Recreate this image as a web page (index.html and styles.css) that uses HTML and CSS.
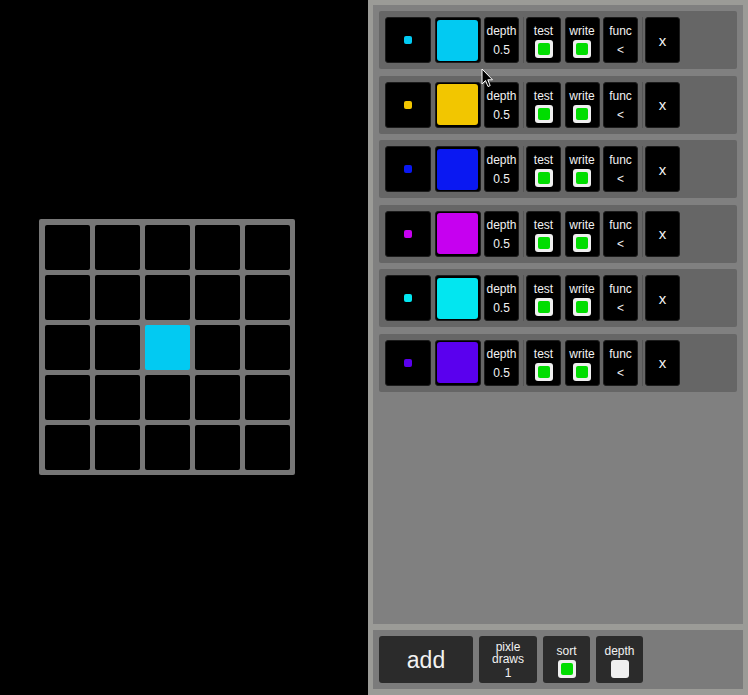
FILE: index.html
```html
<!DOCTYPE html>
<html>
<head>
<meta charset="utf-8">
<link rel="stylesheet" href="styles.css">
</head>
<body>
<div class="stage">
  <div class="grid">
    <div class="px"></div><div class="px"></div><div class="px"></div><div class="px"></div><div class="px"></div>
    <div class="px"></div><div class="px"></div><div class="px"></div><div class="px"></div><div class="px"></div>
    <div class="px"></div><div class="px"></div><div class="px px-on"></div><div class="px"></div><div class="px"></div>
    <div class="px"></div><div class="px"></div><div class="px"></div><div class="px"></div><div class="px"></div>
    <div class="px"></div><div class="px"></div><div class="px"></div><div class="px"></div><div class="px"></div>
  </div>
</div>
<div class="panel">
  <div class="list">
    <div class="row">
      <div class="cell dotcell"><span class="dot c1"></span></div>
      <div class="cell swatch"><span class="fill c1"></span></div>
      <div class="cell narrow two"><span class="lbl">depth</span><span class="val">0.5</span></div>
      <div class="sep"></div>
      <div class="cell narrow chk"><span class="lbl">test</span><span class="box on"></span></div>
      <div class="cell narrow chk"><span class="lbl">write</span><span class="box on"></span></div>
      <div class="cell narrow two"><span class="lbl">func</span><span class="val">&lt;</span></div>
      <div class="sep"></div>
      <div class="cell narrow del">x</div>
    </div>
    <div class="row">
      <div class="cell dotcell"><span class="dot c2"></span></div>
      <div class="cell swatch"><span class="fill c2"></span></div>
      <div class="cell narrow two"><span class="lbl">depth</span><span class="val">0.5</span></div>
      <div class="sep"></div>
      <div class="cell narrow chk"><span class="lbl">test</span><span class="box on"></span></div>
      <div class="cell narrow chk"><span class="lbl">write</span><span class="box on"></span></div>
      <div class="cell narrow two"><span class="lbl">func</span><span class="val">&lt;</span></div>
      <div class="sep"></div>
      <div class="cell narrow del">x</div>
    </div>
    <div class="row">
      <div class="cell dotcell"><span class="dot c3"></span></div>
      <div class="cell swatch"><span class="fill c3"></span></div>
      <div class="cell narrow two"><span class="lbl">depth</span><span class="val">0.5</span></div>
      <div class="sep"></div>
      <div class="cell narrow chk"><span class="lbl">test</span><span class="box on"></span></div>
      <div class="cell narrow chk"><span class="lbl">write</span><span class="box on"></span></div>
      <div class="cell narrow two"><span class="lbl">func</span><span class="val">&lt;</span></div>
      <div class="sep"></div>
      <div class="cell narrow del">x</div>
    </div>
    <div class="row">
      <div class="cell dotcell"><span class="dot c4"></span></div>
      <div class="cell swatch"><span class="fill c4"></span></div>
      <div class="cell narrow two"><span class="lbl">depth</span><span class="val">0.5</span></div>
      <div class="sep"></div>
      <div class="cell narrow chk"><span class="lbl">test</span><span class="box on"></span></div>
      <div class="cell narrow chk"><span class="lbl">write</span><span class="box on"></span></div>
      <div class="cell narrow two"><span class="lbl">func</span><span class="val">&lt;</span></div>
      <div class="sep"></div>
      <div class="cell narrow del">x</div>
    </div>
    <div class="row">
      <div class="cell dotcell"><span class="dot c5"></span></div>
      <div class="cell swatch"><span class="fill c5"></span></div>
      <div class="cell narrow two"><span class="lbl">depth</span><span class="val">0.5</span></div>
      <div class="sep"></div>
      <div class="cell narrow chk"><span class="lbl">test</span><span class="box on"></span></div>
      <div class="cell narrow chk"><span class="lbl">write</span><span class="box on"></span></div>
      <div class="cell narrow two"><span class="lbl">func</span><span class="val">&lt;</span></div>
      <div class="sep"></div>
      <div class="cell narrow del">x</div>
    </div>
    <div class="row">
      <div class="cell dotcell"><span class="dot c6"></span></div>
      <div class="cell swatch"><span class="fill c6"></span></div>
      <div class="cell narrow two"><span class="lbl">depth</span><span class="val">0.5</span></div>
      <div class="sep"></div>
      <div class="cell narrow chk"><span class="lbl">test</span><span class="box on"></span></div>
      <div class="cell narrow chk"><span class="lbl">write</span><span class="box on"></span></div>
      <div class="cell narrow two"><span class="lbl">func</span><span class="val">&lt;</span></div>
      <div class="sep"></div>
      <div class="cell narrow del">x</div>
    </div>
  </div>
  <div class="bar">
    <div class="btn add">add</div>
    <div class="btn draws"><span class="dlbl">pixle</span><span class="dlbl">draws</span><span class="dval">1</span></div>
    <div class="btn opt"><span class="lbl">sort</span><span class="box on"></span></div>
    <div class="btn opt"><span class="lbl">depth</span><span class="box"></span></div>
  </div>
</div>
<svg class="cursor" width="14" height="21" viewBox="0 0 14 21"><path d="M1 1 L1 16 L4.5 12.5 L7 18.5 L9.2 17.6 L6.8 11.8 L11.5 11.8 Z" fill="#000" stroke="#fff" stroke-width="1" stroke-linejoin="round"/></svg>
</body>
</html>
```
FILE: styles.css
```css
html, body {
  margin: 0;
  padding: 0;
}
body {
  width: 748px;
  height: 695px;
  background: #000;
  display: flex;
  font-family: "Liberation Sans", Arial, sans-serif;
  color: #f2f2f2;
  overflow: hidden;
  position: relative;
}
.stage {
  width: 368px;
  flex: none;
  display: flex;
  align-items: center;
  padding-left: 39px;
  padding-bottom: 1px;
  box-sizing: border-box;
}
.grid {
  background: #777;
  border-radius: 2px;
  padding: 5.5px;
  display: grid;
  grid-template-columns: repeat(5, 45px);
  grid-template-rows: repeat(5, 45px);
  gap: 5px;
}
.px {
  background: #000;
  border-radius: 2px;
}
.px-on {
  background: #02caf2;
}
.panel {
  width: 380px;
  flex: none;
  background: #9b9b97;
  padding: 5px 5px 6px 5px;
  box-sizing: border-box;
  display: flex;
  flex-direction: column;
  gap: 6px;
}
.list {
  flex: 1;
  background: #808080;
  padding: 6px;
  display: flex;
  flex-direction: column;
  gap: 6.5px;
}
.row {
  height: 58px;
  box-sizing: border-box;
  background: #666;
  border-radius: 2px;
  padding: 6px;
  display: flex;
  align-items: center;
}
.cell {
  height: 46px;
  box-sizing: border-box;
  background: #000;
  border: 1px solid #1c1c1c;
  border-radius: 3px;
  margin-right: 3.5px;
  flex: none;
}
.dotcell {
  width: 46px;
  display: flex;
  align-items: center;
  justify-content: center;
}
.dot {
  width: 8px;
  height: 8px;
  border-radius: 2px;
}
.swatch {
  width: 46px;
  padding: 1.5px;
  display: flex;
}
.fill {
  flex: 1;
  border-radius: 3px;
}
.narrow {
  width: 35px;
  display: flex;
  flex-direction: column;
  align-items: center;
  justify-content: center;
  font-size: 12px;
}
.two {
  gap: 5px;
  padding-top: 1.5px;
}
.chk {
  gap: 2px;
  padding-top: 2px;
}
.lbl, .val {
  line-height: 14px;
}
.sep {
  width: 1px;
  height: 46px;
  background: #555;
  margin-right: 2.5px;
  flex: none;
}
.del {
  font-size: 15px;
}
.box {
  width: 18px;
  height: 18px;
  box-sizing: border-box;
  background: #efefef;
  border-radius: 3px;
  display: flex;
  align-items: center;
  justify-content: center;
}
.box.on::after {
  content: "";
  width: 12px;
  height: 12px;
  border-radius: 2px;
  background: #00dd00;
}
.c1 { background: #02caf2; }
.c2 { background: #f2c600; }
.c3 { background: #0a18f2; }
.c4 { background: #c600f0; }
.c5 { background: #02e6f0; }
.c6 { background: #5a00ee; }
.bar {
  height: 59px;
  box-sizing: border-box;
  background: #7b7b7b;
  padding: 6px;
  display: flex;
  gap: 6px;
}
.btn {
  background: #2b2b2b;
  border-radius: 3px;
  height: 47px;
  box-sizing: border-box;
  display: flex;
  flex-direction: column;
  align-items: center;
  justify-content: center;
  font-size: 12px;
}
.add {
  width: 94px;
  font-size: 23px;
  padding-top: 2px;
}
.draws {
  width: 58px;
  padding-top: 1px;
}
.dlbl {
  line-height: 12px;
  text-align: center;
}
.dval {
  line-height: 13px;
  margin-top: 2px;
}
.opt {
  width: 47px;
  gap: 2px;
  padding-top: 3px;
}
.cursor {
  position: absolute;
  left: 481px;
  top: 68px;
}
```
